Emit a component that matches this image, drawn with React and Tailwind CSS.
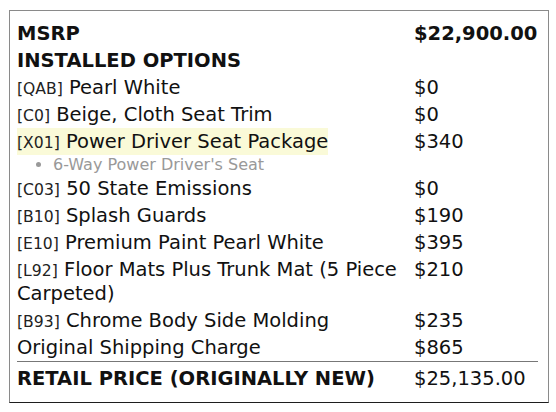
import React from "react";

const options = [
  { code: "QAB", name: "Pearl White", price: "$0" },
  { code: "C0", name: "Beige, Cloth Seat Trim", price: "$0" },
  {
    code: "X01",
    name: "Power Driver Seat Package",
    price: "$340",
    highlight: true,
    items: ["6-Way Power Driver's Seat"],
  },
  { code: "C03", name: "50 State Emissions", price: "$0" },
  { code: "B10", name: "Splash Guards", price: "$190" },
  { code: "E10", name: "Premium Paint Pearl White", price: "$395" },
  { code: "L92", name: "Floor Mats Plus Trunk Mat (5 Piece Carpeted)", price: "$210" },
  { code: "B93", name: "Chrome Body Side Molding", price: "$235" },
];

function Row({ left, right, bold }) {
  return (
    <tr className={bold ? "font-bold" : ""}>
      <td className="w-[397px] py-[1.5px] pr-2 align-top">{left}</td>
      <td className="py-[1.5px] align-top whitespace-nowrap">{right}</td>
    </tr>
  );
}

export default function App() {
  return (
    <div className="min-h-screen bg-white pl-[9px] pt-[10px]">
      <div
        className="w-[540px] h-[393px] border border-[#8a8a8a] border-b-[#1e1e1e] pl-[7px] pr-[10px] pt-[9px] text-[#111] text-[19.5px] leading-[24px]"
        style={{ fontFamily: '"DejaVu Sans", Verdana, sans-serif' }}
      >
        <table className="w-full border-collapse">
          <tbody>
            <Row bold left="MSRP" right="$22,900.00" />
            <Row bold left="INSTALLED OPTIONS" right="" />
            {options.map((o) => (
              <React.Fragment key={o.code}>
                <Row
                  left={
                    <span className={o.highlight ? "bg-[#fafad8] py-[2px]" : ""}>
                      <span className="text-[15.6px] leading-none text-[#222]">[{o.code}]</span> {o.name}
                    </span>
                  }
                  right={o.price}
                />
                {o.items &&
                  o.items.map((it) => (
                    <tr key={it}>
                      <td colSpan={2} className="text-[16px] leading-[20px] text-[#999]">
                        <ul className="list-disc pl-[36px]">
                          <li>{it}</li>
                        </ul>
                      </td>
                    </tr>
                  ))}
              </React.Fragment>
            ))}
            <Row left="Original Shipping Charge" right="$865" />
            <tr className="border-t border-[#777]">
              <td className="pt-[5px] font-bold align-top">RETAIL PRICE (ORIGINALLY NEW)</td>
              <td className="pt-[5px] align-top whitespace-nowrap">$25,135.00</td>
            </tr>
          </tbody>
        </table>
      </div>
    </div>
  );
}
